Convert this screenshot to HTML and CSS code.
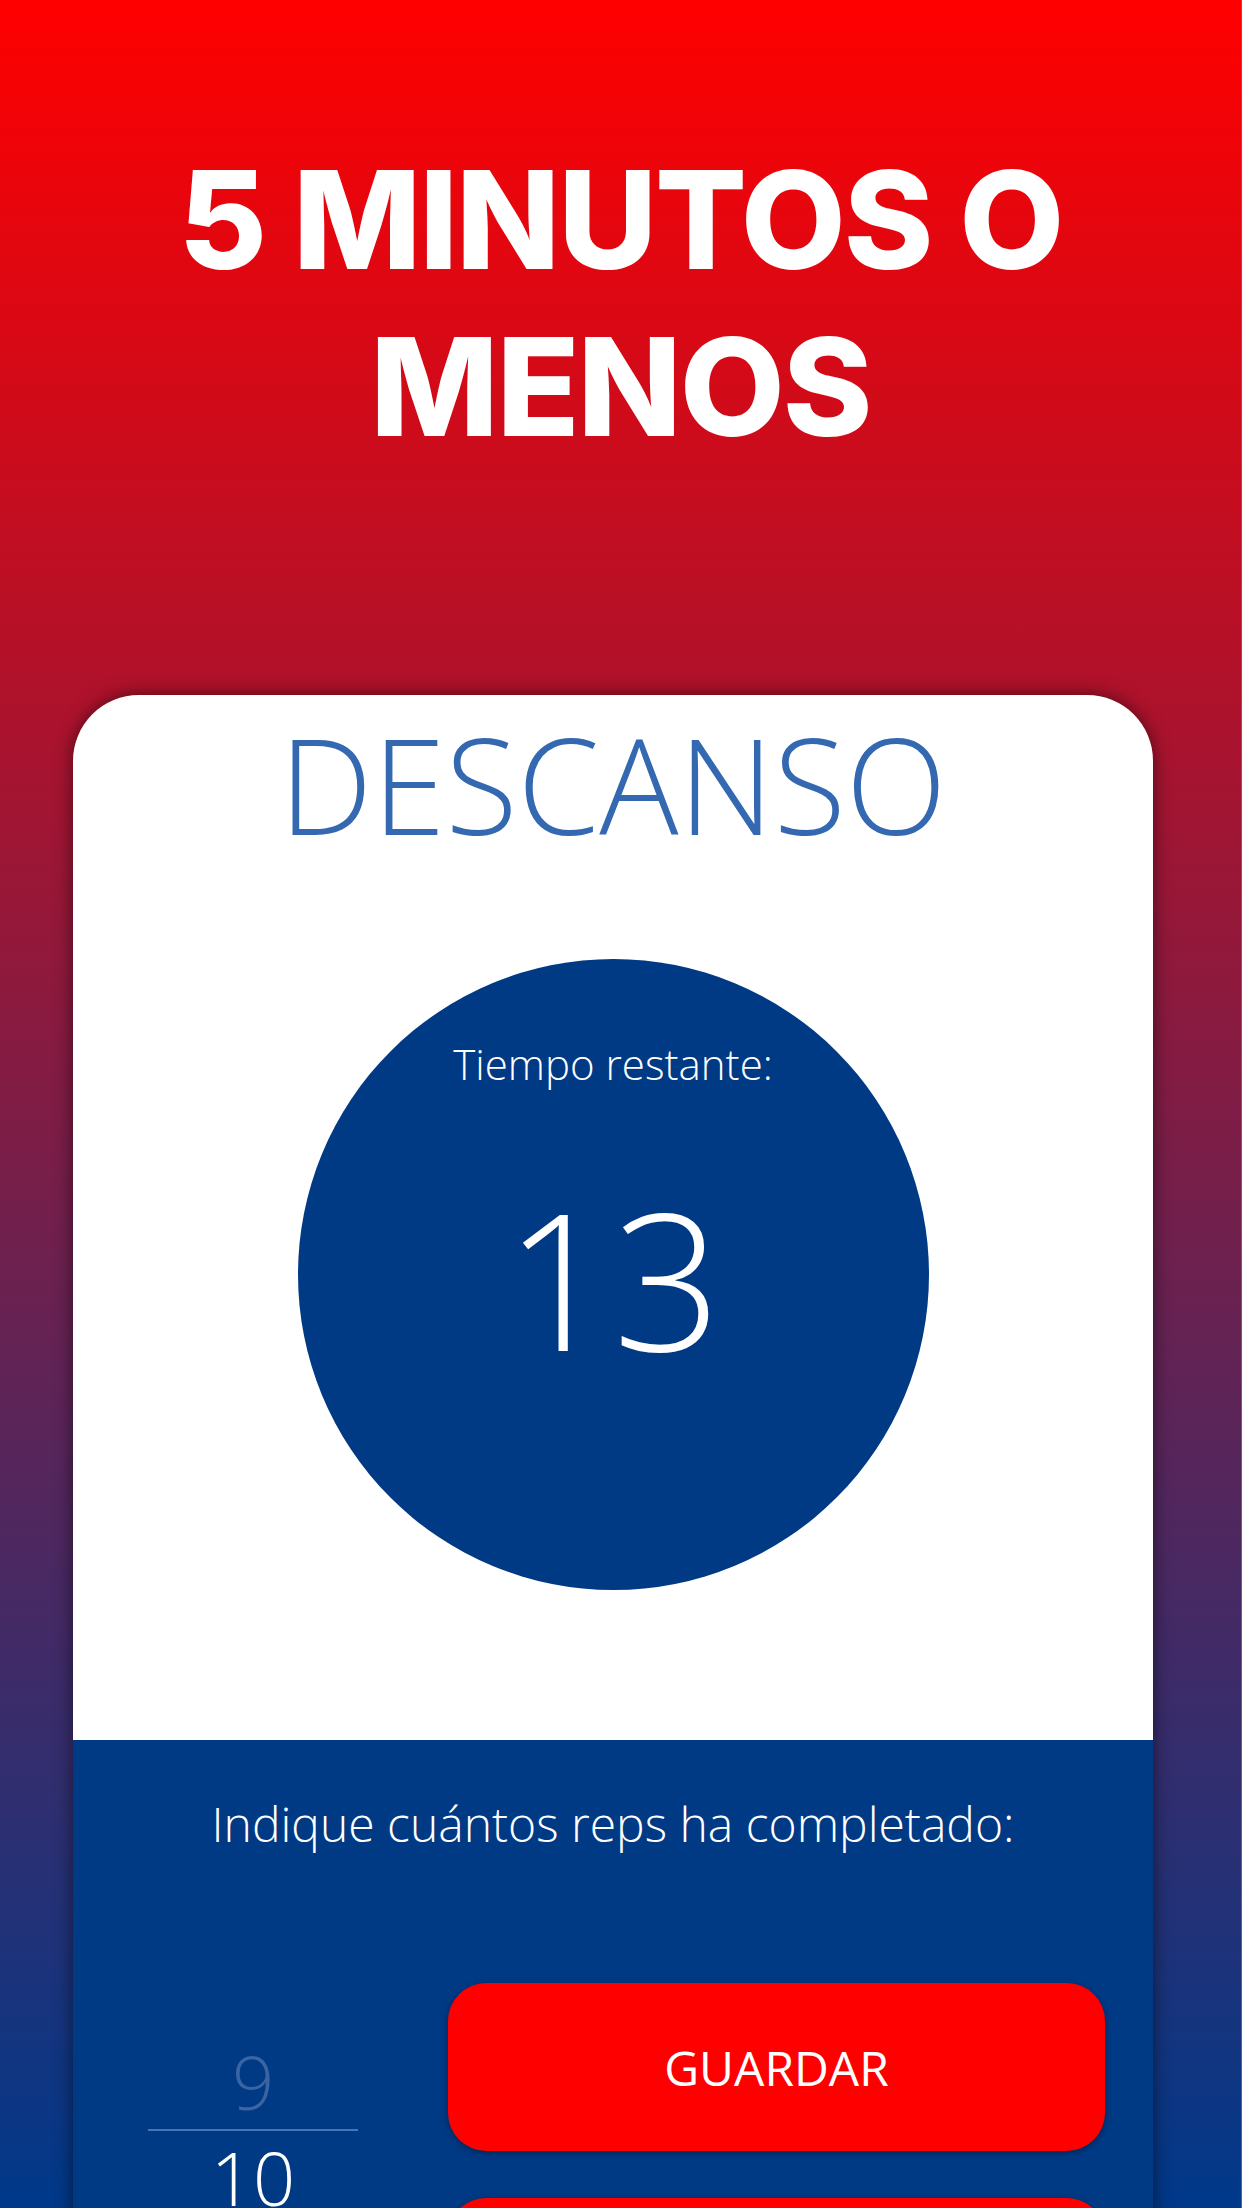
FILE: index.html
```html
<!DOCTYPE html>
<html lang="es">
<head>
<meta charset="utf-8">
<title>5 Minutos o Menos</title>
<link rel="stylesheet" href="styles.css">
</head>
<body>
<div class="page">
  <h1 class="title">5 MINUTOS O<br>MENOS</h1>
  <div class="card">
    <div class="card-top">
      <h2 class="phase">DESCANSO</h2>
      <div class="timer">
        <div class="timer-label">Tiempo restante:</div>
        <div class="timer-value">13</div>
      </div>
    </div>
    <div class="card-bottom">
      <p class="prompt">Indique cuántos reps ha completado:</p>
      <div class="controls">
        <div class="picker">
          <div class="pick pick-prev">9</div>
          <div class="pick-line"></div>
          <div class="pick pick-cur">10</div>
        </div>
        <div class="buttons">
          <button class="btn">GUARDAR</button>
          <button class="btn">TERMINAR</button>
        </div>
      </div>
    </div>
  </div>
</div>
</body>
</html>
```
FILE: styles.css
```css
html, body {
  margin: 0;
  padding: 0;
}
body {
  width: 1242px;
  height: 2208px;
  overflow: hidden;
  background: linear-gradient(180deg, #ff0000 0%, #00398a 100%);
  font-family: "Open Sans", "Liberation Sans", sans-serif;
}
.page {
  display: flex;
  flex-direction: column;
  border-right: 1px solid #e23030;
  height: 2208px;
  box-sizing: border-box;
  overflow: hidden;
}
.title {
  margin: 136px 0 0;
  font-family: Inter, "Liberation Sans", sans-serif;
  font-weight: 800;
  font-size: 136px;
  line-height: 167px;
  color: #fff;
  text-align: center;
  letter-spacing: -2px;
}
.card {
  margin: 225px 0 0 73px;
  width: 1080px;
  border-radius: 66px 66px 0 0;
  box-shadow: 0 0 18px rgba(0, 0, 0, 0.55);
  flex: 1 0 auto;
  display: flex;
  flex-direction: column;
  overflow: hidden;
}
.card-top {
  background: #fff;
  height: 1045px;
  flex: 0 0 1045px;
  display: flex;
  flex-direction: column;
  align-items: center;
}
.phase {
  margin: 14px 0 0;
  font-weight: 300;
  font-size: 132px;
  line-height: 150px;
  color: #3469b1;
  letter-spacing: 0;
}
.timer {
  margin-top: 100px;
  width: 631px;
  height: 631px;
  border-radius: 50%;
  background: #003984;
  color: #fff;
  display: flex;
  flex-direction: column;
  align-items: center;
}
.timer-label {
  margin-top: 75px;
  font-weight: 300;
  font-size: 42px;
  line-height: 60px;
}
.timer-value {
  margin-top: 74px;
  font-weight: 300;
  font-size: 190px;
  line-height: 220px;
}
.card-bottom {
  background: #003984;
  flex: 1 0 auto;
  display: flex;
  flex-direction: column;
}
.prompt {
  margin: 51px 0 0;
  text-align: center;
  color: #fff;
  font-weight: 300;
  font-size: 48px;
  line-height: 66px;
}
.controls {
  display: flex;
  margin-top: 126px;
  padding: 0 48px 0 75px;
  gap: 90px;
}
.picker {
  width: 210px;
  display: flex;
  flex-direction: column;
  align-items: center;
  padding-top: 59px;
}
.pick {
  font-weight: 300;
  font-size: 74px;
  line-height: 80px;
}
.pick-prev {
  color: #3a64a3;
}
.pick-line {
  width: 210px;
  height: 2px;
  background: #4a75b5;
  margin: 7px 0 7px;
}
.pick-cur {
  color: #fff;
}
.buttons {
  flex: 1;
  display: flex;
  flex-direction: column;
  gap: 47px;
}
.btn {
  height: 168px;
  border: none;
  border-radius: 38px;
  background: #ff0000;
  color: #fff;
  font-family: "Open Sans", "Liberation Sans", sans-serif;
  font-weight: 400;
  font-size: 48px;
  box-shadow: 0 2px 6px rgba(0, 0, 0, 0.35);
}
```
